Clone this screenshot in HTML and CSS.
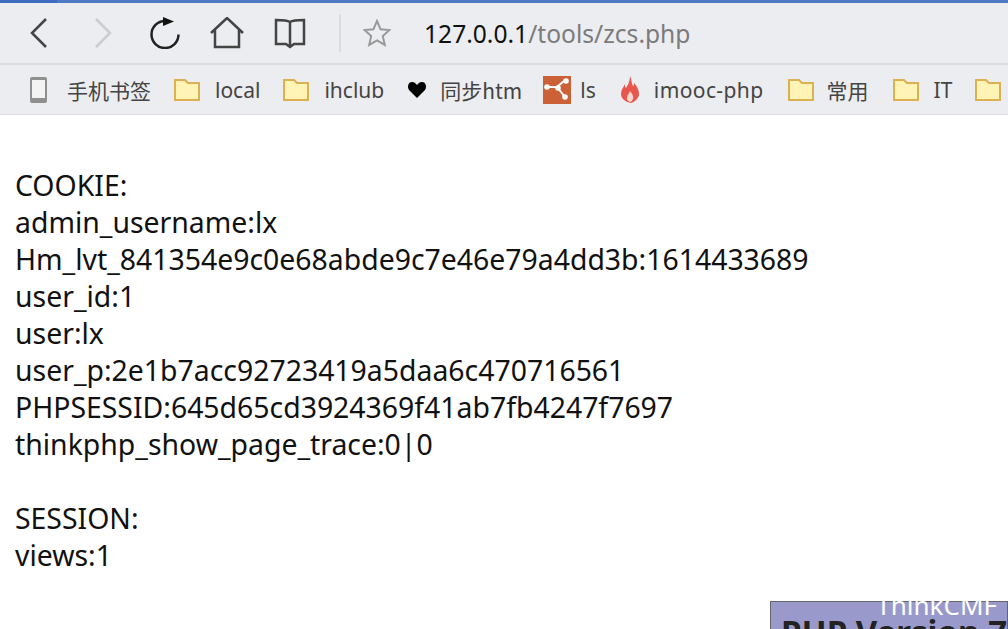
FILE: index.html

```html
<!DOCTYPE html>
<html lang="zh-CN">
<head>
<meta charset="UTF-8" />
<title>127.0.0.1/tools/zcs.php</title>
<link rel="stylesheet" href="styles.css">
</head>
<body>
  <svg class="defs" width="0" height="0">
    <symbol id="folder" viewBox="0 0 26 22">
      <path fill="#fff3b5" stroke="#dcb151" stroke-width="2" d="M1 3V1h10l3 3h11v17H1z" />
    </symbol>
  </svg>

  <div class="tabstrip"><span class="tab-active"></span></div>

  <div class="toolbar">
    <svg class="nav-icon back" width="18" height="32" viewBox="0 0 18 32"><path d="M16 2 2 16l14 14" /></svg>
    <svg class="nav-icon forward" width="18" height="32" viewBox="0 0 18 32"><path d="M2 2l14 14L2 30" /></svg>
    <svg class="nav-icon reload" width="30" height="32" viewBox="0 0 30 32"><path d="M15 4A13.500 13.500 0 1 0 28.500 17.500" /><path class="solid" d="M13 0l11 4.500L13 9z" /></svg>
    <svg class="nav-icon home" width="34" height="32" viewBox="0 0 34 32"><path d="M1 16 17 1l16 15M5 12v18h24V12" /></svg>
    <svg class="nav-icon book" width="32" height="31" viewBox="0 0 32 31"><path d="M16 4C13 2 6 2 2 2v24h10l4 3 4-3h10V2c-4 0-11 0-14 2zm0 0v25" /></svg>
    <span class="toolbar-sep"></span>
    <svg class="nav-icon star" width="28" height="28" viewBox="0 0 28 28"><path d="m14 2 3.600 8.300 8.900.8-6.700 6 2 8.800L14 21.300l-7.800 4.600 2-8.800-6.700-6 8.900-.8z" /></svg>
    <div class="address"><b>127.0.0.1</b>/tools/zcs.php</div>
  </div>

  <div class="bookmarks">
    <span class="mark phone-mark"><i class="phone"></i><span class="cjk">手机书签</span></span>
    <span class="mark local-mark"><svg class="folder"><use href="#folder" /></svg>local</span>
    <span class="mark club-mark"><svg class="folder"><use href="#folder" /></svg>ihclub</span>
    <span class="mark sync-mark">
      <svg class="mark-icon" width="20" height="18" viewBox="0 0 20 18"><path fill="#000" d="M10 17 2 9C0 6 1 1 5 1c2.500 0 4 1.500 5 3 1-1.500 2.500-3 5-3 4 0 5 5 3 8z" /></svg><span class="cjk">同步htm</span>
    </span>
    <span class="mark ls-mark">
      <svg class="mark-icon" width="28" height="28" viewBox="0 0 28 28"><rect width="28" height="28" fill="#cc6137" /><path stroke="#fff" stroke-width="2" d="M4 11h10l7-6M14 11l8 10" fill="none" /><circle cx="4" cy="11" r="2.800" fill="#fff" /><circle cx="15" cy="12" r="2.800" fill="#fff" /><circle cx="23" cy="5" r="2.800" fill="#fff" /><circle cx="22" cy="21" r="2.800" fill="#fff" /></svg>ls
    </span>
    <span class="mark imooc-mark">
      <svg class="mark-icon" width="18" height="27" viewBox="0 0 18 27"><path fill="#e8574e" d="M9 0c2 4 1 7 3 10 1 0 1-2 1-3 3 3 5 7 5 11 0 4-4 8-8 9-5-1-10-4-10-9 0-4 2-6 4-10 0 2 0 3 1 4 2-3 4-7 4-12z" /><path fill="#f9d7d2" d="M9 15c2 3 4 5 3 8-1 2-2 3-3 3-2-1-3-2-3-4 0-3 2-4 3-7z" /></svg><span class="imooc-label">imooc-php</span>
    </span>
    <span class="mark common-mark"><svg class="folder"><use href="#folder" /></svg><span class="cjk">常用</span></span>
    <span class="mark it-mark"><svg class="folder"><use href="#folder" /></svg>IT</span>
    <span class="mark last-mark"><svg class="folder"><use href="#folder" /></svg></span>
  </div>

  <div class="page">
    <p class="dump">COOKIE:
admin_username:lx
Hm_lvt_841354e9c0e68abde9c7e46e79a4dd3b:1614433689
user_id:1
user:lx
user_p:2e1b7acc92723419a5daa6c470716561
PHPSESSID:645d65cd3924369f41ab7fb4247f7697
thinkphp_show_page_trace:0|0

SESSION:
views:1</p>
    <div class="phpinfo">
      <span class="brand">ThinkCMF</span>
      <h1>PHP Version 7</h1>
    </div>
  </div>
</body>
</html>
```

FILE: styles.css

```css
html, body {
  margin: 0;
  height: 100%;
  overflow: hidden;
}

body {
  display: flex;
  flex-direction: column;
  background: #fff;
  font-family: "Noto Sans", "Noto Sans CJK SC", sans-serif;
}

.defs { position: absolute; }

.tabstrip {
  display: flex;
  height: 3px;
  flex: none;
  background: #4f79c3;
}

.tab-active {
  width: 57px;
  background: #3e6dbf;
}

.toolbar {
  display: flex;
  align-items: center;
  flex: none;
  height: 62px;
  box-sizing: border-box;
  padding: 0 0 0 30px;
  background: #ecedf0;
  border-bottom: 2px solid #dcdcdc;
}

.nav-icon {
  flex: none;
  fill: none;
  stroke: #444;
  stroke-width: 2.500;
}

.nav-icon .solid {
  fill: #111;
  stroke: none;
}

.forward { margin-left: 46px; stroke: #ccc; }
.reload { margin-left: 38px; stroke: #222; }
.home { margin-left: 30px; }
.book { margin-left: 30px; }
.star { margin-left: 22px; stroke: #999; stroke-width: 2; }

.toolbar-sep {
  width: 2px;
  height: 38px;
  margin-left: 33px;
  background: #dcdcdc;
}

.address {
  margin-left: 33px;
  font-size: 24.600px;
  color: #7b7b7b;
  white-space: nowrap;
}

.address b {
  font-weight: 400;
  color: #111;
}

.bookmarks {
  display: flex;
  align-items: center;
  flex: none;
  height: 50px;
  box-sizing: border-box;
  padding-left: 30px;
  background: #ecedf0;
  border-bottom: 1px solid #dcdcdc;
  font-size: 21px;
  color: #444;
  white-space: nowrap;
}

.cjk { font-family: "Noto Sans CJK SC", "Noto Sans", sans-serif; }

.mark {
  display: flex;
  align-items: center;
  flex: none;
}

.mark-icon { flex: none; }

.phone {
  width: 17px;
  height: 26px;
  margin-right: 20px;
  box-sizing: border-box;
  background: #f3f3f3;
  border: 3px solid #8f8f8f;
  border-width: 3px 2px 5px;
  border-radius: 2px;
}

.folder {
  width: 26px;
  height: 22px;
  margin-right: 15px;
}

.local-mark { margin-left: 23px; }
.club-mark { margin-left: 23px; }
.sync-mark { margin-left: 23px; }
.sync-mark .mark-icon { margin-right: 13px; }
.ls-mark { margin-left: 21px; }
.ls-mark .mark-icon { margin-right: 9px; }
.imooc-mark { margin-left: 25px; }
.imooc-mark .mark-icon { margin-right: 15px; }
.imooc-label { letter-spacing: 0.400px; }
.common-mark { margin-left: 24px; }
.common-mark .folder { margin-right: 13px; }
.it-mark { margin-left: 24px; }
.last-mark { margin-left: 23px; }

.page {
  flex: 1;
  min-height: 0;
}

.dump {
  margin: 52px 0 0 15px;
  font-size: 28.400px;
  line-height: 37px;
  color: #111;
  white-space: pre;
}

.phpinfo {
  height: 28px;
  margin: 27px 0 0 770px;
  box-sizing: border-box;
  border: 1px solid #666;
  border-bottom: 0;
  background: #9999cc;
  position: relative;
}

.brand {
  position: absolute;
  top: -8px;
  right: 10px;
  font-size: 26px;
  line-height: 22px;
  color: #fff;
}

.phpinfo h1 {
  margin: 14px 0 0 10px;
  font-size: 33px;
  line-height: 32px;
  color: #222;
  white-space: nowrap;
}
```
